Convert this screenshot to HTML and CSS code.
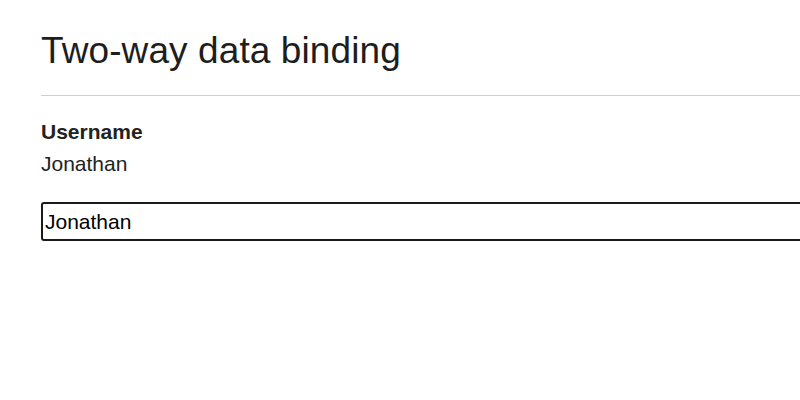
FILE: index.html
```html
<!DOCTYPE html>
<html>
<head>
    <title>Two-way data binding</title>
    <meta name="viewport" content="width=device-width, initial-scale=1.0">
    <link rel="stylesheet" href="styles.css">
</head>
<body>
    <div class="container">
        <h1>Two-way data binding</h1>
        <hr>
        <div class="field">
            <label for="username">Username</label>
            <p id="preview">Jonathan</p>
            <input id="username" type="text" value="Jonathan">
        </div>
    </div>
</body>
</html>
```
FILE: styles.css
```css
* {
    margin: 0;
    padding: 0;
    box-sizing: border-box;
}

html, body {
    overflow: hidden;
}

body {
    font-family: "Liberation Sans", Arial, Helvetica, sans-serif;
    font-size: 21px;
    line-height: 31.5px;
    color: #222;
    background: #fff;
}

.container {
    width: 1100px;
    padding-left: 41px;
}

h1 {
    margin-top: 30px;
    font-size: 37px;
    font-weight: normal;
    line-height: 41px;
    letter-spacing: 0.1px;
    color: #1e1e1e;
}

hr {
    margin-top: 24px;
    border: none;
    border-top: 1px solid #cfcfcf;
}

.field {
    margin-top: 20px;
}

.field label {
    display: block;
    font-weight: bold;
}

.field input {
    display: block;
    width: 100%;
    height: 39px;
    margin-top: 23px;
    padding: 0 2px;
    font-family: inherit;
    font-size: 21px;
    color: #000;
    border: 2px solid #1a1a1a;
    border-radius: 3px;
    outline: none;
}
```
